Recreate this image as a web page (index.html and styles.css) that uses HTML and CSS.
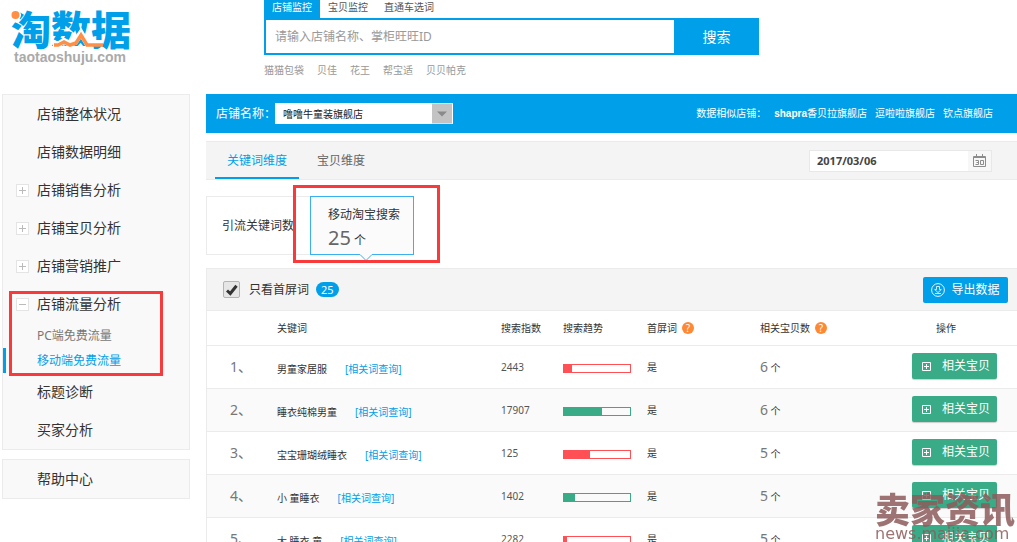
FILE: index.html
```html
<!DOCTYPE html>
<html lang="zh-CN">
<head>
<meta charset="utf-8">
<title>淘数据</title>
<link rel="stylesheet" href="styles.css">
</head>
<body>
<svg class="defs" aria-hidden="true">
  <symbol id="plus-box" viewBox="0 0 9 9"><path d="M.5.5h8v8h-8zM2 4.5h5M4.5 2v5" fill="none" stroke="currentColor"/></symbol>
</svg>

<header class="header">
  <a class="logo" href="#">
    <span class="logo-name">淘数据</span>
    <svg class="logo-accent" viewBox="0 0 120 40" aria-hidden="true">
      <circle cx="4.500" cy="5" r="5.500" fill="#fff"/>
      <circle cx="4.500" cy="5" r="4" fill="#ff8f44"/>
      <path d="M41 36h38v4H41z" fill="#fff"/>
      <path d="M42 34h6l5-3 6 3 5-2 6-9 6 10h16" fill="none" stroke="#fff" stroke-width="6"/>
      <path d="M43 35h4l6-3 6 3 6-2 5-8 6 10h16" fill="none" stroke="#ff8f44" stroke-width="3.500"/>
    </svg>
    <span class="logo-domain">taotaoshuju.com</span>
  </a>
  <div class="search">
    <nav class="search-tabs">
      <a class="search-tab is-active" href="#">店铺监控</a>
      <a class="search-tab" href="#">宝贝监控</a>
      <a class="search-tab" href="#">直通车选词</a>
    </nav>
    <form class="search-form">
      <input class="search-input" type="text" aria-label="搜索" placeholder="请输入店铺名称、掌柜旺旺ID">
      <button class="search-button" type="button">搜索</button>
    </form>
    <nav class="hot-words">
      <a href="#">猫猫包袋</a><a href="#">贝佳</a><a href="#">花王</a><a href="#">帮宝适</a><a href="#">贝贝帕克</a>
    </nav>
  </div>
</header>

<div class="layout">
  <aside class="sidebar">
    <nav class="menu">
      <a class="menu-item" href="#">店铺整体状况</a>
      <a class="menu-item" href="#">店铺数据明细</a>
      <a class="menu-item has-toggle" href="#"><i class="toggle"></i>店铺销售分析</a>
      <a class="menu-item has-toggle" href="#"><i class="toggle"></i>店铺宝贝分析</a>
      <a class="menu-item has-toggle" href="#"><i class="toggle"></i>店铺营销推广</a>
      <div class="menu-group">
        <a class="menu-item has-toggle" href="#"><i class="toggle is-open"></i>店铺流量分析</a>
        <a class="menu-sub" href="#">PC端免费流量</a>
        <a class="menu-sub is-active" href="#">移动端免费流量</a>
        <span class="mark mark-menu"></span>
      </div>
      <a class="menu-item" href="#">标题诊断</a>
      <a class="menu-item" href="#">买家分析</a>
    </nav>
    <nav class="menu"><a class="menu-item" href="#">帮助中心</a></nav>
  </aside>

  <main class="content">
    <section class="shop-bar">
      <label class="shop-label" for="shop">店铺名称：</label>
      <div class="shop-select">
        <select id="shop"><option>噜噜牛童装旗舰店</option></select>
        <svg class="shop-arrow" viewBox="0 0 20 20" aria-hidden="true"><path fill="#c3c3c3" d="M0 0h20v20H0z"/><path fill="#8a8a8a" d="M5 8h10l-5 5z"/></svg>
      </div>
      <div class="similar">
        <span>数据相似店铺：</span>
        <a href="#"><b>shapra</b>香贝拉旗舰店</a>
        <a href="#">逗啦啦旗舰店</a>
        <a href="#">钦点旗舰店</a>
      </div>
    </section>

    <section class="tabs-bar">
      <a class="tab is-active" href="#">关键词维度</a>
      <a class="tab" href="#">宝贝维度</a>
      <div class="date">
        <input type="text" aria-label="日期" value="2017/03/06">
        <button type="button" aria-label="选择日期">
          <svg width="13" height="13" viewBox="0 0 13 13" fill="none" stroke="#8c8c8c"><path d="M.5 2.500h12v10H.5z"/><path d="M0 3.500h13M3.500 0v3M9.500 0v3"/><path d="M2.500 6.500h3v4h-3M3.500 8.500h2M7.500 6.500h3v4h-3z"/></svg>
        </button>
      </div>
    </section>

    <section class="cards">
      <div class="card">引流关键词数</div>
      <div class="card is-active">
        <span>移动淘宝搜索</span>
        <span class="card-count"><strong>25</strong> 个</span>
        <svg class="card-arrow" width="14" height="8" viewBox="0 0 14 8" aria-hidden="true"><path d="M0 0h14v1L7 7 0 1z" fill="#fbfbfb"/><path d="M0 .5h1l6 6 6-6h1" fill="none" stroke="#3bb0ee"/></svg>
        <span class="mark mark-card"></span>
      </div>
    </section>

    <section class="panel">
      <div class="toolbar">
        <label class="only-first">
          <span class="check"><input type="checkbox" checked><svg width="12" height="12" viewBox="0 0 12 12" aria-hidden="true"><path d="M1 6.500 4.300 9.500 10.500 1.800" fill="none" stroke="#333" stroke-width="3"/></svg></span>
          只看首屏词
        </label>
        <span class="badge">25</span>
        <button class="export" type="button">
          <svg width="14" height="14" viewBox="0 0 14 14" fill="none" stroke="#fff"><circle cx="7" cy="7" r="6.400" stroke-width=".9"/><path d="M5.500 3.500h3v3h1.800L7 9.600 3.700 6.500h1.800zM4 10.500h6" stroke-width=".8"/></svg>
          导出数据
        </button>
      </div>

      <table class="words">
        <colgroup><col class="c-no"><col><col class="c-index"><col class="c-trend"><col class="c-first"><col class="c-count"><col class="c-action"></colgroup>
        <thead>
          <tr><th></th><th>关键词</th><th>搜索指数</th><th>搜索趋势</th><th>首屏词<span class="help">?</span></th><th>相关宝贝数<span class="help">?</span></th><th class="action-head">操作</th></tr>
        </thead>
        <tbody>
          <tr><td class="no">1、</td><td><span class="word">男童家居服</span><a class="query" href="#">[相关词查询]</a></td><td class="index">2443</td><td><div class="trend down"><i style="width:12%"></i></div></td><td>是</td><td><span class="num">6</span> 个</td><td class="action"><button class="related" type="button"><svg><use href="#plus-box"/></svg>相关宝贝</button></td></tr>
          <tr><td class="no">2、</td><td><span class="word">睡衣纯棉男童</span><a class="query" href="#">[相关词查询]</a></td><td class="index">17907</td><td><div class="trend up"><i style="width:57%"></i></div></td><td>是</td><td><span class="num">6</span> 个</td><td class="action"><button class="related" type="button"><svg><use href="#plus-box"/></svg>相关宝贝</button></td></tr>
          <tr><td class="no">3、</td><td><span class="word">宝宝珊瑚绒睡衣</span><a class="query" href="#">[相关词查询]</a></td><td class="index">125</td><td><div class="trend down"><i style="width:39%"></i></div></td><td>是</td><td><span class="num">5</span> 个</td><td class="action"><button class="related" type="button"><svg><use href="#plus-box"/></svg>相关宝贝</button></td></tr>
          <tr><td class="no">4、</td><td><span class="word">小 童睡衣</span><a class="query" href="#">[相关词查询]</a></td><td class="index">1402</td><td><div class="trend up"><i style="width:17%"></i></div></td><td>是</td><td><span class="num">5</span> 个</td><td class="action"><button class="related" type="button"><svg><use href="#plus-box"/></svg>相关宝贝</button></td></tr>
          <tr><td class="no">5、</td><td><span class="word">大 睡衣 童</span><a class="query" href="#">[相关词查询]</a></td><td class="index">2282</td><td><div class="trend down"><i style="width:5%"></i></div></td><td>是</td><td><span class="num">5</span> 个</td><td class="action"><button class="related" type="button"><svg><use href="#plus-box"/></svg>相关宝贝</button></td></tr>
        </tbody>
      </table>
    </section>
  </main>
</div>

<div class="watermark"><span class="watermark-name">卖家资讯</span><span class="watermark-site">news.maijia.com</span></div>
</body>
</html>
```
FILE: styles.css
```css
* { box-sizing: border-box; }
body {
  margin: 0;
  height: 100vh;
  overflow: hidden;
  background: #fff;
  color: #333;
  font: 10px/16px "Noto Sans", "Noto Sans CJK SC", sans-serif;
}
a { color: inherit; text-decoration: none; }
button, input, select { font: inherit; color: inherit; border: 0; border-radius: 0; padding: 0; margin: 0; outline: 0; }
.defs { position: absolute; width: 0; height: 0; }

/* header */
.header { display: flex; height: 94px; }
.logo { position: relative; width: 264px; padding: 10px 0 0 11px; display: flex; flex-direction: column; gap: 3px; }
.logo-name { color: #009fe9; font: 900 40px/36px "Noto Sans CJK SC", sans-serif; }
.logo-accent { position: absolute; left: 11px; top: 10px; width: 120px; height: 40px; }
.logo-domain { padding-left: 3px; color: #aaa; font: bold 14px/16px "Liberation Sans", sans-serif; }
.search { width: 495px; }
.search-tabs { display: flex; height: 18px; color: #555; }
.search-tab { padding: 0 8px; line-height: 15px; }
.search-tab.is-active { background: #009fe9; color: #fff; }
.search-form { display: flex; height: 37px; }
.search-input { flex: 1; border: 2px solid #009fe9; border-right: 0; padding: 0 9px; font-size: 12px; }
.search-input::placeholder { color: #999; }
.search-button { width: 85px; background: #009fe9; color: #fff; font-size: 14px; }
.hot-words { display: flex; gap: 13px; padding-top: 7px; color: #999; }

/* page columns */
.layout { display: flex; gap: 16px; padding-left: 2px; }
.sidebar { width: 188px; flex: none; display: flex; flex-direction: column; gap: 9px; }
.content { flex: 1; min-width: 0; }

/* side menu */
.menu { background: #f9f9f9; border: 1px solid #ebebeb; font-size: 14px; }
.menu-item { display: flex; align-items: center; height: 38px; padding-left: 34px; color: #333; }
.menu-item.has-toggle { padding-left: 13px; gap: 8px; }
.menu-group { position: relative; }
.toggle { width: 13px; height: 13px; border: 1px solid #e4e4e4; background: linear-gradient(#bbb, #bbb) center / 7px 1px no-repeat, linear-gradient(#bbb, #bbb) center / 1px 7px no-repeat, #fff; }
.toggle.is-open { background: linear-gradient(#bbb, #bbb) center / 7px 1px no-repeat, #fff; }
.menu-sub { display: flex; align-items: center; height: 25px; padding-left: 31px; border-left: 3px solid transparent; color: #777; font-size: 12px; }
.menu-sub.is-active { border-color: #009fe9; color: #009fe9; }

/* red annotation frames */
.mark { position: absolute; border: 3px solid #f83a3a; pointer-events: none; }
.mark-menu { left: 6px; top: 6px; width: 154px; bottom: -3px; }
.mark-card { left: -18px; top: -12px; right: -27px; bottom: -9px; }

/* shop bar */
.shop-bar { display: flex; align-items: center; height: 39px; padding: 0 24px 0 10px; background: #009fe9; color: #fff; }
.shop-label { width: 59px; font-size: 12px; white-space: nowrap; }
.shop-select { position: relative; width: 178px; height: 21px; }
.shop-select select { appearance: none; width: 100%; height: 100%; padding-left: 8px; background: #fff; color: #222; }
.shop-arrow { position: absolute; right: 1px; top: 0; width: 20px; height: 21px; pointer-events: none; }
.similar { display: flex; gap: 8px; margin-left: auto; }
.similar b { font-family: "Liberation Sans", sans-serif; }

/* dimension tabs */
.tabs-bar { display: flex; height: 39px; margin-top: 8px; padding: 0 25px 0 9px; background: #f4f4f4; border: solid #ebebeb; border-width: 1px 0; }
.tab { display: flex; align-items: center; padding: 0 12px; margin-right: 6px; color: #666; font-size: 12px; }
.tab.is-active { color: #009fe9; box-shadow: inset 0 -2px #009fe9; }
.date { display: flex; align-self: center; width: 183px; height: 22px; margin-left: auto; border: 1px solid #e8e8e8; }
.date input { flex: 1; min-width: 0; padding-left: 7px; background: #fff; color: #444; font-weight: bold; font-size: 11px; }
.date button { display: grid; place-items: center; width: 23px; background: #f7f7f7; }

/* summary cards */
.cards { display: flex; height: 59px; margin-top: 16px; }
.card { display: flex; align-items: center; width: 104px; padding-left: 16px; border: 1px solid #ebebeb; background: #fff; font-size: 12px; white-space: nowrap; overflow: hidden; }
.card:first-child { border-right: 0; padding-left: 15px; }
.card.is-active { position: relative; overflow: visible; flex-direction: column; align-items: flex-start; padding: 10px 0 0 17px; border-color: #3bb0ee; background: #fbfbfb; }
.card-count { line-height: 30px; }
.card-count strong { color: #666; font-weight: normal; font-size: 20px; }
.card-arrow { position: absolute; left: 48px; bottom: -8px; }

/* keyword panel */
.panel { margin-top: 13px; border-left: 1px solid #ebebeb; }
.toolbar { display: flex; align-items: center; height: 42px; padding: 0 9px 0 16px; background: #f4f4f4; border-top: 1px solid #ebebeb; }
.only-first { display: flex; align-items: center; gap: 9px; font-size: 12px; }
.check { display: grid; place-items: center; width: 17px; height: 17px; }
.check > * { grid-area: 1 / 1; }
.check input { appearance: none; width: 17px; height: 17px; border: 1px solid #b4b4b4; border-radius: 2px; background: #e6e6e6; }
.check svg { pointer-events: none; }
.badge { margin-left: 7px; padding: 0 5px; border-radius: 8px; background: #009fe9; color: #fff; font-size: 11px; line-height: 15px; }
.export { display: flex; align-items: center; justify-content: center; gap: 6px; width: 85px; height: 26px; margin-left: auto; border-radius: 2px; background: #009fe9; color: #fff; font-size: 12px; }

.words { width: 100%; table-layout: fixed; border-collapse: collapse; }
.c-no { width: 70px; }
.c-index { width: 62px; }
.c-trend { width: 84px; }
.c-first { width: 113px; }
.c-count { width: 152px; }
.c-action { width: 105px; }
.words th, .words td { padding: 0; text-align: left; font-weight: normal; white-space: nowrap; vertical-align: middle; }
.words th { height: 35px; border-top: 1px solid #ebebeb; }
.words td { height: 43px; border-top: 1px solid #ebebeb; }
.words tbody tr:nth-child(even) { background: #fafafa; }
.words th.action-head { padding-left: 24px; }
.words .action { padding-bottom: 2px; }
.words .no { padding-left: 23px; color: #777; font-size: 14px; }
.word { display: inline-block; padding-top: 4px; }
.query { margin-left: 18px; color: #009fe9; }
.words .index { color: #555; font-size: 10px; }
.num { color: #777; font-size: 14px; }
.help { display: inline-block; width: 12px; height: 12px; margin-left: 5px; border-radius: 50%; background: #ff8833; color: #fff; font-size: 10px; line-height: 12px; text-align: center; }
.trend { width: 68px; height: 9px; margin-top: 2px; border: 1px solid; }
.trend i { display: block; height: 100%; background: currentColor; }
.down { color: #ff5055; }
.up { color: #3aab87; }
.related { display: flex; align-items: center; gap: 11px; width: 85px; height: 26px; padding-left: 10px; border-radius: 2px; background: #3aab87; box-shadow: 0 1px 1px #ccc; color: #fff; font-size: 12px; }
.related svg { width: 9px; height: 9px; }

/* site watermark */
.watermark { position: fixed; right: 2px; bottom: 0; display: flex; flex-direction: column; gap: 2px; color: #8d5b5b; opacity: .85; }
.watermark-name { font: 900 35px/32px "Noto Sans CJK SC", sans-serif; }
.watermark-site { font: 16px/16px "DejaVu Sans", sans-serif; }
```
